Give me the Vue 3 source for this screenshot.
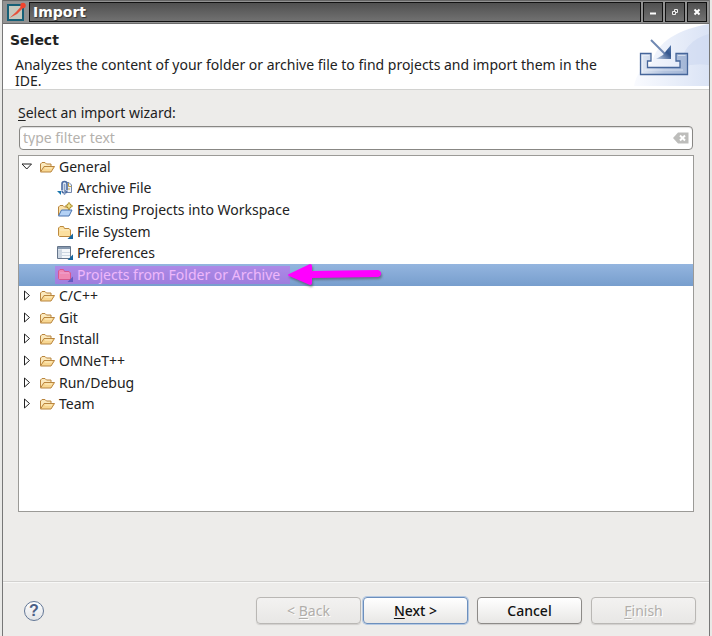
<script setup>
import { ref, computed } from 'vue'

const filter = ref('')
const selected = ref('Projects from Folder or Archive')
const groups = ref([
  {
    name: 'General',
    open: true,
    items: [
      { name: 'Archive File', icon: 'archive' },
      { name: 'Existing Projects into Workspace', icon: 'existing' },
      { name: 'File System', icon: 'folder' },
      { name: 'Preferences', icon: 'prefs' },
      { name: 'Projects from Folder or Archive', icon: 'folder', marked: true }
    ]
  },
  { name: 'C/C++', open: false, items: [] },
  { name: 'Git', open: false, items: [] },
  { name: 'Install', open: false, items: [] },
  { name: 'OMNeT++', open: false, items: [] },
  { name: 'Run/Debug', open: false, items: [] },
  { name: 'Team', open: false, items: [] }
])

const rows = computed(() =>
  groups.value.flatMap((g) => [
    { name: g.name, group: g, icon: 'open' },
    ...(g.open ? g.items : [])
  ])
)
</script>

<template>
  <div class="desktop">
    <main class="window">
      <header class="titlebar">
        <svg class="app-icon" viewBox="0 0 20 20" aria-hidden="true">
          <rect x="2" y="3" width="15" height="15" fill="#c6c9bf" stroke="#176077" stroke-width="2" />
          <path d="M3.500 16 10 10 15 4.500 17 6 11 12Z" fill="#e7503a" />
          <circle cx="17" cy="3.500" r="2.700" fill="#f0432c" />
        </svg>
        <h1 class="title">Import</h1>
        <button class="wm" type="button" aria-label="Minimize">
          <svg viewBox="0 0 10 10"><path d="M2 6.500H8" stroke="#fff" stroke-width="2" /></svg>
        </button>
        <button class="wm" type="button" aria-label="Restore">
          <svg viewBox="0 0 10 10"><path d="M4.500 4V2.500H7.500V5.500H6M2.500 4.500H5.500V7.500H2.500Z" fill="none" stroke="#eee" stroke-width="1" /></svg>
        </button>
        <button class="wm" type="button" aria-label="Close">
          <svg viewBox="0 0 10 10"><path d="M2.500 2.500 7.500 7.500M7.500 2.500 2.500 7.500" stroke="#fff" stroke-width="2" /></svg>
        </button>
      </header>

      <section class="banner">
        <div class="banner-text">
          <h2>Select</h2>
          <p>Analyzes the content of your folder or archive file to find projects and import them in the IDE.</p>
        </div>
        <svg class="banner-art" viewBox="0 0 75 62" aria-hidden="true">
          <defs>
            <linearGradient id="glow" x1="0" y1="0" x2="1" y2="0">
              <stop offset="0" stop-color="#f7f9fe" /><stop offset="1" stop-color="#cedaf2" />
            </linearGradient>
            <linearGradient id="tray" x1="0" y1="0" x2="1" y2="0">
              <stop offset="0" stop-color="#e2e9f4" /><stop offset=".5" stop-color="#b4c4df" /><stop offset="1" stop-color="#a3b6d6" />
            </linearGradient>
            <linearGradient id="tip" x1="0" y1="1" x2="1" y2="0">
              <stop offset="0" stop-color="#c7d5e9" /><stop offset=".6" stop-color="#35578e" /><stop offset="1" stop-color="#5578ad" />
            </linearGradient>
          </defs>
          <path d="M75 0C45 5 22 18 18 39Q3 45 0 62H75Z" fill="url(#glow)" opacity=".75" />
          <path d="M75 10Q49 17 46 43Q62 39 75 41Z" fill="#c9d6f0" opacity=".5" />
          <path d="M17 16 31 30" stroke="#6f88b2" stroke-width="2" />
          <path d="M37 21V35H22L29 31 32 27Z" fill="url(#tip)" />
          <path d="M6.500 29.500H17V37H13.500V43.500H46V37H42V29.500H53.500V50.500H6.500Z" fill="url(#tray)" stroke="#46669a" stroke-width="1.300" />
          <path d="M8.500 31.500H15M8.500 31.500V48.500M44 31.500H51.500M11 46H49" fill="none" stroke="#eef3fa" stroke-width="1" opacity=".6" />
        </svg>
      </section>

      <section class="body">
        <label class="caption" for="filter"><u>S</u>elect an import wizard:</label>
        <div class="filter">
          <input id="filter" v-model="filter" type="text" placeholder="type filter text" />
          <button class="clear" type="button" aria-label="Clear" @click="filter = ''">
            <svg viewBox="0 0 16 12">
              <path d="M0 6 5 .5H15.500V11.500H5Z" fill="#bdbdbb" />
              <path d="M7 3.500 12 8.500M12 3.500 7 8.500" stroke="#fff" stroke-width="2" />
            </svg>
          </button>
        </div>

        <div class="tree-box">
          <ul class="tree" role="tree">
            <li
              v-for="row in rows"
              :key="row.name"
              role="treeitem"
              class="row"
              :class="{ child: !row.group, selected: row.name === selected }"
              :aria-selected="row.name === selected"
              @click="selected = row.name"
            >
              <button v-if="row.group" class="twisty" type="button" :aria-label="'Toggle ' + row.name" @click.stop="row.group.open = !row.group.open">
                <svg viewBox="0 0 12 12">
                  <path v-if="row.group.open" d="M1 3H10.500L5.750 8Z" fill="#fff" stroke="#222" />
                  <path v-else d="M3.500 1V10L8.500 5.500Z" fill="#fff" stroke="#222" />
                </svg>
              </button>
              <span class="entry" :class="{ marked: row.marked }">
                <svg class="icon" viewBox="0 0 16 16" aria-hidden="true">
                  <g v-if="row.icon === 'open'" stroke="#b9853e" stroke-linejoin="round">
                    <path d="M1.500 12.500V5L3 3.500H6L7.500 5H12V8" fill="#fbe9bd" />
                    <path d="M1.500 13 5 7.500H15.500L12 13Z" fill="#f8d792" />
                    <path d="M6 9H13" stroke="#fff0c6" />
                  </g>
                  <g v-else-if="row.icon === 'archive'">
                    <path d="M8.500 2.500H12L14.500 5V12.500H8.500Z" fill="#eef1f7" stroke="#7187ad" />
                    <path d="M11.500 3V6.500H14.500M10.500 9H13" fill="none" stroke="#c0a04c" />
                    <path d="M5 10V4Q5 1.500 7.500 1.500T10 4V10" fill="#dce6f5" stroke="#4c6ca3" stroke-width="1.600" />
                    <path d="M5 10.500Q5 13 7.500 13T10 10.500" fill="none" stroke="#4c6ca3" stroke-width="1.400" />
                    <path d="M7.500 4V15" stroke="#8ba0c4" stroke-width="1.500" />
                    <path d="M0 11H4V15Z" fill="#1a76ad" />
                  </g>
                  <g v-else-if="row.icon === 'existing'">
                    <path d="M1.500 13V5L3 3.500H6L7.500 5H12V8" fill="#fae2aa" stroke="#b9853e" />
                    <path d="M1.500 14 4.500 8H15L12 14Z" fill="#b3d1f5" stroke="#4873af" stroke-linejoin="round" />
                    <path d="M12 .5 13.500 2.500 15.500 4 13.500 5.500 12 7.500 10.500 5.500 8.500 4 10.500 2.500Z" fill="#b18d22" stroke="#a58218" />
                    <path d="M12 1.500V6.500M9.500 4H14.500" stroke="#fff5aa" stroke-width="1.200" />
                  </g>
                  <g v-else-if="row.icon === 'folder'">
                    <path class="folder" d="M1.500 11.500V4L3 2.500H6.500L7.500 4.500H12L13.500 6V12.500H2.500Z" fill="#fbe0a0" stroke="#bd8a3f" stroke-linejoin="round" />
                    <path d="M3 6H12" stroke="#fff5d7" opacity=".7" />
                    <path d="M16 9.500V15H10.500Z" fill="#18679f" />
                  </g>
                  <g v-else>
                    <path d="M.5 1.500H13.500V13.500H.5Z" fill="#f4f7fa" stroke="#65758b" />
                    <path d="M1 3H13" stroke="#8799af" stroke-width="2" />
                    <path d="M1 4.500H4.500V13H1Z" fill="#cbd5e1" />
                    <path d="M4.500 4.500V13M1 7.500H13M1 10.500H13" stroke="#cdd7e2" />
                    <path d="M16 9.500V15H10.500Z" fill="#18679f" />
                  </g>
                </svg>
                <span>{{ row.name }}</span>
                <svg v-if="row.marked" class="arrow" viewBox="0 0 98 30" aria-hidden="true">
                  <path d="M3 14 24 4Q26 4 26 6V11L92 10Q95 11 95 13.500T92 17L26 18V23Q26 25 24 25L3 16Q1 15 3 14Z" fill="#f0f" />
                </svg>
              </span>
            </li>
          </ul>
        </div>
      </section>

      <footer class="actions">
        <button class="help" type="button" aria-label="Help">?</button>
        <div class="pair">
          <button class="btn" type="button" disabled><span>&lt; <u>B</u>ack</span></button>
          <button class="btn primary" type="button"><span><u>N</u>ext &gt;</span></button>
        </div>
        <button class="btn strong" type="button">Cancel</button>
        <button class="btn" type="button" disabled><span><u>F</u>inish</span></button>
      </footer>
    </main>
  </div>
</template>

<style>
body {
  margin: 0;
}
</style>

<style scoped>
* {
  box-sizing: border-box;
}
.desktop {
  min-height: 100vh;
  display: flex;
  padding: 0 2px;
  background: #e9e9e7;
  font: 14px/16px "Noto Sans", "Open Sans", sans-serif;
  color: #222;
}
.window {
  flex: 1;
  min-width: 0;
  display: flex;
  flex-direction: column;
  background: #edecea;
  border: solid #777;
  border-width: 0 1px;
}
button,
input {
  font: inherit;
  color: inherit;
}
svg {
  display: block;
}
u {
  text-decoration-thickness: 1px;
  text-underline-offset: 2px;
}
.titlebar {
  display: flex;
  align-items: center;
  gap: 2px;
  height: 24px;
  padding: 0 2px 0 3px;
  background: #929292;
  border-top: 1px solid #666;
  border-bottom: 1px solid #6c6c6c;
}
.app-icon {
  width: 20px;
  height: 20px;
  margin-right: 1px;
}
.title {
  flex: 1;
  height: 20px;
  margin: 0;
  padding-left: 3px;
  border: 1px solid #111;
  background: linear-gradient(#505050, #717171);
  color: #fff;
  font: bold 14px/18px "DejaVu Sans", sans-serif;
  text-shadow: 1px 1px 1px #333;
}
.wm {
  width: 20px;
  height: 20px;
  padding: 4px;
  border: 1px solid #111;
  background: linear-gradient(#505050, #717171);
}
.wm svg {
  width: 10px;
  height: 10px;
}
.banner {
  display: flex;
  justify-content: space-between;
  background: #fff;
  border-bottom: 1px solid #d2d2d0;
}
.banner-text {
  padding: 8px 24px 0 7px;
}
.banner h2 {
  margin: 0;
  font: bold 14px/16px "DejaVu Sans", sans-serif;
}
.banner p {
  margin: 9px 0 0 5px;
}
.banner-art {
  flex: none;
  width: 75px;
  height: 62px;
}
.body {
  flex: 1;
  display: flex;
  flex-direction: column;
  padding: 15px 15px 69px;
}
.caption {
  align-self: flex-start;
}
.filter {
  display: flex;
  align-items: center;
  height: 24px;
  margin: 5px 1px;
  padding: 0 3px;
  border: 1px solid #888784;
  border-radius: 4px;
  background: #fff;
  box-shadow: inset 0 1px 1px #ddd;
}
.filter input {
  flex: 1;
  min-width: 0;
  padding: 0;
  border: 0;
  outline: 0;
  background: none;
}
.filter input::placeholder {
  color: #b4b1ad;
  opacity: 1;
}
.clear {
  padding: 0;
  border: 0;
  background: none;
}
.clear svg {
  width: 16px;
  height: 12px;
}
.tree-box {
  flex: 1;
  border: 1px solid #9b9a97;
  background: #fff;
}
.tree {
  display: grid;
  grid-auto-rows: 1fr;
  height: 259px;
  margin: 0;
  padding: 0;
  list-style: none;
}
.row {
  display: flex;
  align-items: center;
  gap: 6px;
  padding-left: 2px;
}
.row.child {
  padding-left: 38px;
}
.row.selected {
  background: linear-gradient(#94b5df, #779ecd);
  color: #fff;
}
.twisty {
  padding: 0;
  border: 0;
  background: none;
}
.twisty svg {
  width: 12px;
  height: 12px;
}
.entry {
  position: relative;
  display: flex;
  align-items: center;
  gap: 4px;
  padding: 1px 0;
}
.icon {
  width: 16px;
  height: 16px;
}
.marked {
  padding-right: 10px;
}
.marked .folder {
  fill: #ffb387;
  stroke: #d8604a;
}
.marked::after {
  content: "";
  position: absolute;
  inset: 0 0 0 -2px;
  background: #d84cf566;
}
.arrow {
  position: absolute;
  z-index: 1;
  left: 100%;
  top: -6px;
  width: 98px;
  height: 30px;
  margin-left: -4px;
  filter: drop-shadow(1px 2px 1px #4448);
}
.actions {
  display: flex;
  align-items: center;
  gap: 9px;
  padding: 15px 13px 12px 21px;
  border-top: 1px solid #d3d2d0;
  box-shadow: inset 0 1px #f8f8f7;
}
.help {
  width: 20px;
  height: 20px;
  margin-right: auto;
  padding: 0;
  border: 1px solid #637796;
  border-radius: 50%;
  background: linear-gradient(#fff, #e1e3e6);
  color: #4b6087;
  font: bold 16px/18px "Liberation Sans", sans-serif;
}
.pair {
  display: flex;
  gap: 2px;
}
.btn {
  width: 105px;
  height: 27px;
  padding: 0;
  border: 1px solid #8d8b88;
  border-radius: 4px;
  background: linear-gradient(#fff, #e8e7e5);
  box-shadow: 0 1px 1px #d0cfcd;
}
.btn:disabled {
  border-color: #b9b7b4;
  background: linear-gradient(#f3f2f1, #e8e7e5);
  color: #b1aeaa;
  text-shadow: 1px 1px #fff;
}
.primary {
  border-color: #6c8fbd;
  box-shadow: 0 0 0 1px #b5c9e2;
  font-weight: 500;
  color: #111;
}
.strong {
  font-weight: 500;
  color: #111;
}
</style>
